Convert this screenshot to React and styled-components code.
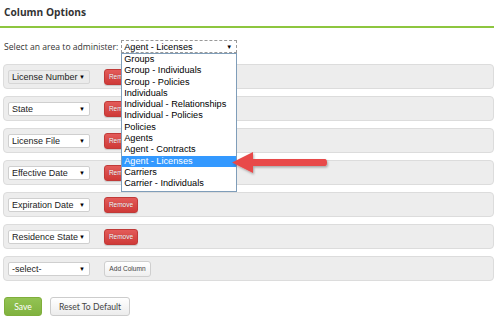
import React from "react";
import styled, { createGlobalStyle } from "styled-components";

const Global = createGlobalStyle`
  html, body { margin: 0; padding: 0; background: #fff; }
  body { width: 500px; height: 322px; overflow: hidden; font-family: "Liberation Sans", Arial, sans-serif; }
`;

const Page = styled.div`
  position: relative;
  width: 494px;
  height: 322px;
`;

const Header = styled.div`
  height: 28px;
  border-bottom: 2px solid #8dc63f;
  box-sizing: border-box;
  padding: 5px 0 0 4px;
`;

const Title = styled.h1`
  margin: 0;
  font-family: "Open Sans", sans-serif;
  font-weight: 700;
  font-size: 10.2px;
  line-height: 14px;
  color: #333;
`;

const Body = styled.div`
  padding: 12px 0 0 3px;
`;

const AreaLine = styled.div`
  display: flex;
  align-items: center;
  gap: 3px;
  height: 13px;
  padding-left: 1px;
`;

const AreaLabel = styled.span`
  font-family: "Open Sans", sans-serif;
  font-size: 8.6px;
  color: #333;
  white-space: nowrap;
`;

const AreaSelectWrap = styled.div`
  position: relative;
`;

const AreaSelect = styled.div`
  width: 116px;
  height: 13px;
  box-sizing: border-box;
  border: 1px dashed #999;
  background: #fff;
  display: flex;
  align-items: center;
  justify-content: space-between;
  padding: 0 4px 0 2px;
  font-size: 9.2px;
  color: #000;
  white-space: nowrap;
`;

const Caret = styled.span`
  font-size: 6px;
  color: #000;
  flex: none;
`;

const ListBox = styled.div`
  position: absolute;
  top: 100%;
  left: 0;
  width: 116px;
  box-sizing: border-box;
  border: 1px solid #7f9db9;
  background: #fff;
  z-index: 5;
  padding: 0 0 1px;
`;

const ListItem = styled.div`
  height: 11.3px;
  line-height: 11.3px;
  padding-left: 2px;
  font-size: 9.2px;
  color: ${(p) => (p.$active ? "#fff" : "#000")};
  background: ${(p) => (p.$active ? "#3399ff" : "transparent")};
  white-space: nowrap;
`;

const Rows = styled.div`
  display: flex;
  flex-direction: column;
  gap: 7px;
  margin-top: 11px;
  width: 491px;
`;

const Row = styled.div`
  height: 25px;
  box-sizing: border-box;
  background: #ededed;
  border: 1px solid #dcdcdc;
  border-radius: 4px;
  display: flex;
  align-items: center;
  padding-left: 4px;
  gap: 14px;
`;

const ColSelect = styled.div`
  width: 82px;
  height: 14px;
  box-sizing: border-box;
  border: 1px solid ${(p) => (p.$muted ? "#d6d6d6" : "#cfcfcf")};
  border-radius: 2px;
  background: ${(p) => (p.$muted ? "#ebebeb" : "#fff")};
  display: flex;
  align-items: center;
  justify-content: space-between;
  padding: 0 4px 0 3px;
  font-size: 9px;
  color: #222;
  white-space: nowrap;
  overflow: hidden;
`;

const RemoveButton = styled.button`
  width: 34px;
  height: 16px;
  padding: 0;
  border: 1px solid #c03a38;
  border-radius: 3px;
  background: linear-gradient(#e35b59, #cf3a38);
  color: #fff;
  font-family: "Liberation Sans", Arial, sans-serif;
  font-size: 6.5px;
  text-shadow: 0 0 1px rgba(0,0,0,0.4);
  box-shadow: 0 1px 1px rgba(0,0,0,0.15);
`;

const AddButton = styled.button`
  width: 47px;
  height: 16px;
  padding: 0;
  border: 1px solid #cfcfcf;
  border-radius: 3px;
  background: linear-gradient(#ffffff, #efefef);
  color: #444;
  font-family: "Liberation Sans", Arial, sans-serif;
  font-size: 6.6px;
`;

const Footer = styled.div`
  display: flex;
  gap: 8px;
  margin-top: 16px;
  padding-left: 1px;
`;

const SaveButton = styled.button`
  width: 38px;
  height: 19px;
  padding: 0;
  border: 1px solid #7fae3b;
  border-radius: 3px;
  background: linear-gradient(#93c353, #80b23f);
  color: #fff;
  font-family: "Lato", sans-serif;
  font-size: 8.6px;
`;

const ResetButton = styled.button`
  width: 80px;
  height: 19px;
  padding: 0;
  border: 1px solid #cccccc;
  border-radius: 3px;
  background: linear-gradient(#ffffff, #ececec);
  color: #444;
  font-family: "Lato", sans-serif;
  font-size: 8.6px;
`;

const Arrow = styled.svg`
  position: absolute;
  left: 228px;
  top: 148px;
  z-index: 6;
  overflow: visible;
`;

const areas = [
  "Groups",
  "Group - Individuals",
  "Group - Policies",
  "Individuals",
  "Individual - Relationships",
  "Individual - Policies",
  "Policies",
  "Agents",
  "Agent - Contracts",
  "Agent - Licenses",
  "Carriers",
  "Carrier - Individuals",
];

const columns = [
  { label: "License Number", muted: true },
  { label: "State" },
  { label: "License File" },
  { label: "Effective Date" },
  { label: "Expiration Date" },
  { label: "Residence State" },
];

export default function App() {
  return (
    <Page>
      <Global />
      <Header>
        <Title>Column Options</Title>
      </Header>
      <Body>
        <AreaLine>
          <AreaLabel>Select an area to administer:</AreaLabel>
          <AreaSelectWrap>
            <AreaSelect>
              <span>Agent - Licenses</span>
              <Caret>▼</Caret>
            </AreaSelect>
            <ListBox>
              {areas.map((a) => (
                <ListItem key={a} $active={a === "Agent - Licenses"}>
                  {a}
                </ListItem>
              ))}
            </ListBox>
          </AreaSelectWrap>
        </AreaLine>
        <Rows>
          {columns.map((c) => (
            <Row key={c.label}>
              <ColSelect $muted={c.muted}>
                <span>{c.label}</span>
                <Caret>▼</Caret>
              </ColSelect>
              <RemoveButton>Remove</RemoveButton>
            </Row>
          ))}
          <Row>
            <ColSelect>
              <span>-select-</span>
              <Caret>▼</Caret>
            </ColSelect>
            <AddButton>Add Column</AddButton>
          </Row>
        </Rows>
        <Footer>
          <SaveButton>Save</SaveButton>
          <ResetButton>Reset To Default</ResetButton>
        </Footer>
      </Body>
      <Arrow width="100" height="28" viewBox="0 0 100 28">
        <defs>
          <filter id="sh" x="-10%" y="-30%" width="130%" height="180%">
            <feDropShadow dx="1" dy="1.5" stdDeviation="1" floodColor="#000" floodOpacity="0.3" />
          </filter>
        </defs>
        <path
          d="M4 14.5 L25 4 L25 11 L97 11 Q99 11 99 14.5 Q99 18 97 18 L25 18 L25 25 Z"
          fill="#e84a4a"
          filter="url(#sh)"
        />
      </Arrow>
    </Page>
  );
}
